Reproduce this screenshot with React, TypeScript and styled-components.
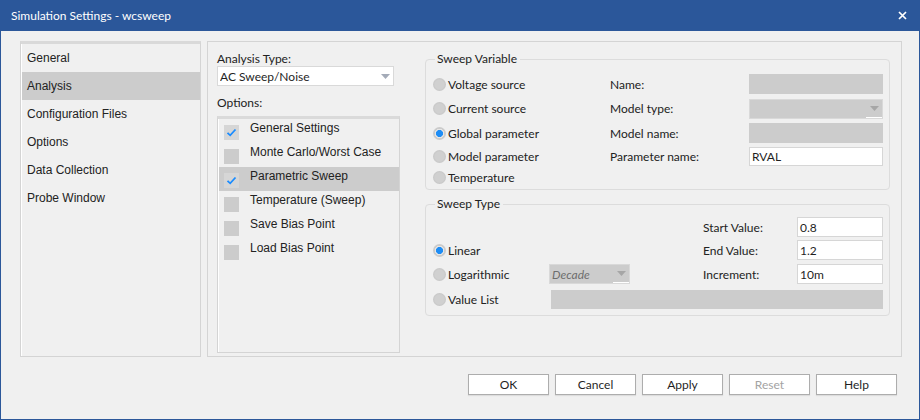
import styled, { createGlobalStyle } from 'styled-components';

const GlobalStyle = createGlobalStyle`
  html, body {
    margin: 0;
    padding: 0;
    background: #f0f0f0;
  }
  * {
    box-sizing: border-box;
  }
`;

const ui = `Lato, "Noto Sans", sans-serif`;
const classic = `"Liberation Sans", Arial, sans-serif`;

const Window = styled.div`
  width: 920px;
  height: 420px;
  background: #f0f0f0;
  border: 1px solid #2b579a;
  border-top: none;
  display: flex;
  flex-direction: column;
  font-family: ${ui};
  font-size: 12px;
  color: #1f1f1f;
`;

const TitleBar = styled.div`
  height: 31px;
  background: #2b579a;
  color: #fff;
  display: flex;
  align-items: center;
  justify-content: space-between;
  padding: 0 13px 0 11px;
  margin: 0 -1px;
  font-size: 12px;
`;

const Body = styled.div`
  padding: 10px 0 0 19px;
  display: flex;
  flex-direction: column;
`;

const MainRow = styled.div`
  display: flex;
  height: 316px;
  gap: 6px;
`;

const Nav = styled.div`
  width: 181px;
  border: 1px solid #d4d4d4;
  border-top: 3px solid #d9d9d9;
  box-shadow: inset 1px 0 #fff;
  padding: 0 0 0 1px;
  font-family: ${classic};
`;

const NavItem = styled.div<{ $active?: boolean }>`
  height: 28px;
  display: flex;
  align-items: center;
  padding-left: 5px;
  background: ${p => (p.$active ? '#cccccc' : 'transparent')};
  color: #222;
`;

const Panel = styled.div`
  width: 695px;
  border: 1px solid #d4d4d4;
  display: flex;
  gap: 25px;
  padding: 9px 0 0 9px;
`;

const LeftCol = styled.div`
  width: 183px;
  display: flex;
  flex-direction: column;
`;

const FieldLabel = styled.div<{ $top: number }>`
  line-height: 14px;
  margin-top: ${p => p.$top}px;
  color: #222;
`;

const Select = styled.div<{ $disabled?: boolean; $width?: number; $italic?: boolean }>`
  height: 20px;
  width: ${p => (p.$width ? `${p.$width}px` : '100%')};
  display: flex;
  align-items: center;
  background: ${p => (p.$disabled ? '#cccccc' : '#fff')};
  border: 1px solid #d9d9d9;
  padding-left: 2px;
  font-style: ${p => (p.$italic ? 'italic' : 'normal')};
  color: ${p => (p.$italic ? '#6d6d6d' : '#1f1f1f')};
`;

const SelectValue = styled.div`
  flex: 1;
  white-space: nowrap;
  overflow: hidden;
`;

const Arrow = styled.div<{ $disabled?: boolean }>`
  width: 16px;
  height: 100%;
  display: flex;
  align-items: center;
  justify-content: center;
  border-bottom: ${p => (p.$disabled ? '1px solid #fff' : 'none')};
  svg {
    display: block;
  }
`;

const OptionList = styled.div`
  margin-top: 6px;
  height: 237px;
  border: 1px solid #d4d4d4;
  border-top: 3px solid #dadada;
  box-shadow: inset 1px 0 #fff;
  padding-left: 1px;
  font-family: ${classic};
`;

const OptionRow = styled.div<{ $active?: boolean }>`
  height: 24px;
  display: flex;
  align-items: center;
  padding-left: 5px;
  gap: 11px;
  background: ${p => (p.$active ? '#cccccc' : 'transparent')};
`;

const CheckBox = styled.div<{ $checked?: boolean }>`
  width: 15px;
  height: 15px;
  background: ${p => (p.$checked ? '#d6d6d6' : '#cccccc')};
  display: flex;
  align-items: center;
  justify-content: center;
  margin-top: 2px;
`;

const OptionText = styled.span`
  padding-bottom: 7px;
  color: #222;
`;

const RightCol = styled.div`
  width: 465px;
  display: flex;
  flex-direction: column;
  gap: 6px;
`;

const Group = styled.fieldset<{ $pt: number; $pb: number }>`
  margin: 0;
  border: 1px solid #dcdcdc;
  border-radius: 4px;
  padding: ${p => p.$pt}px 0 ${p => p.$pb}px 7px;
  min-width: 0;
`;

const Legend = styled.legend`
  line-height: 16px;
  padding: 0 3px 0 2px;
  margin-left: 2px;
  color: #222;
`;

const Grid = styled.div<{ $cols: string; $rows: string }>`
  display: grid;
  grid-template-columns: ${p => p.$cols};
  grid-template-rows: ${p => p.$rows};
  align-items: center;
`;

const RadioWrap = styled.div<{ $col?: number; $row?: number }>`
  display: flex;
  align-items: center;
  gap: 2px;
  grid-column: ${p => p.$col ?? 1};
  grid-row: ${p => p.$row ?? 'auto'};
  color: #222;
  white-space: nowrap;
`;

const RadioDot = styled.div<{ $on?: boolean }>`
  width: 13px;
  height: 13px;
  border-radius: 50%;
  background: ${p =>
    p.$on
      ? 'radial-gradient(circle, #1e8df5 0 3.3px, #e6e6e6 3.8px 4.6px, #cbcbcb 5px)'
      : 'radial-gradient(circle, #d0d0d0 0 4.5px, #c6c6c6 6.5px)'};
`;

const Label = styled.div<{ $col: number; $row?: number }>`
  grid-column: ${p => p.$col};
  grid-row: ${p => p.$row ?? 'auto'};
  color: #222;
  white-space: nowrap;
`;

const Input = styled.div<{ $disabled?: boolean; $col: number; $row?: number; $span?: number; $h?: number; $ml?: number }>`
  grid-column: ${p => p.$col} / span ${p => p.$span ?? 1};
  grid-row: ${p => p.$row ?? 'auto'};
  height: ${p => p.$h ?? 20}px;
  margin-left: ${p => p.$ml ?? 0}px;
  background: ${p => (p.$disabled ? '#cccccc' : '#fff')};
  border: 1px solid ${p => (p.$disabled ? '#cccccc' : '#d6d6d6')};
  display: flex;
  align-items: center;
  padding-left: 2px;
  color: #1f1f1f;
`;

const Cell = styled.div<{ $col: number; $row: number }>`
  grid-column: ${p => p.$col};
  grid-row: ${p => p.$row};
`;

const ButtonRow = styled.div`
  margin-top: 17px;
  display: flex;
  justify-content: flex-end;
  gap: 6px;
  padding-right: 22px;
`;

const Button = styled.button<{ $disabled?: boolean }>`
  width: 81px;
  height: 21px;
  background: #fff;
  border: 1px solid #adadad;
  box-shadow: 0 1px 1px rgba(0, 0, 0, 0.08);
  font-family: ${ui};
  font-size: 12px;
  color: ${p => (p.$disabled ? '#a3a3a3' : '#1f1f1f')};
  padding: 0;
`;

const Check = () => (
  <svg width="11" height="9" viewBox="0 0 11 9">
    <path d="M1.5 4.8 L4.2 7.3 L9.5 1.5" fill="none" stroke="#1a8cff" strokeWidth="1.8" />
  </svg>
);

const Tri = ({ color }: { color: string }) => (
  <svg width="9" height="5" viewBox="0 0 9 5">
    <path d="M0 0 H9 L4.5 5 Z" fill={color} />
  </svg>
);

const Radio = ({ label, on, col, row }: { label: string; on?: boolean; col?: number; row?: number }) => (
  <RadioWrap $col={col} $row={row}>
    <RadioDot $on={on} />
    <span>{label}</span>
  </RadioWrap>
);

const navItems = ['General', 'Analysis', 'Configuration Files', 'Options', 'Data Collection', 'Probe Window'];

const options = [
  { label: 'General Settings', checked: true },
  { label: 'Monte Carlo/Worst Case' },
  { label: 'Parametric Sweep', checked: true, active: true },
  { label: 'Temperature (Sweep)' },
  { label: 'Save Bias Point' },
  { label: 'Load Bias Point' },
];

export default function App() {
  return (
    <>
      <GlobalStyle />
      <Window>
        <TitleBar>
          <span>Simulation Settings - wcsweep</span>
          <svg width="9" height="9" viewBox="0 0 9 9">
            <path d="M1 1 L8 8 M8 1 L1 8" stroke="#fff" strokeWidth="1.7" />
          </svg>
        </TitleBar>
        <Body>
          <MainRow>
            <Nav>
              {navItems.map(n => (
                <NavItem key={n} $active={n === 'Analysis'}>
                  {n}
                </NavItem>
              ))}
            </Nav>
            <Panel>
              <LeftCol>
                <FieldLabel $top={1}>Analysis Type:</FieldLabel>
                <Select $width={177}>
                  <SelectValue>AC Sweep/Noise</SelectValue>
                  <Arrow>
                    <Tri color="#a4abb8" />
                  </Arrow>
                </Select>
                <FieldLabel $top={10}>Options:</FieldLabel>
                <OptionList>
                  {options.map(o => (
                    <OptionRow key={o.label} $active={o.active}>
                      <CheckBox $checked={o.checked}>{o.checked && <Check />}</CheckBox>
                      <OptionText>{o.label}</OptionText>
                    </OptionRow>
                  ))}
                </OptionList>
              </LeftCol>
              <RightCol>
                <Group $pt={5} $pb={2}>
                  <Legend>Sweep Variable</Legend>
                  <Grid $cols="177px 139px 134px" $rows="24px 25px 24px 22px 20px">
                    <Radio label="Voltage source" row={1} />
                    <Label $col={2} $row={1}>Name:</Label>
                    <Input $col={3} $row={1} $disabled />
                    <Radio label="Current source" row={2} />
                    <Label $col={2} $row={2}>Model type:</Label>
                    <Cell $col={3} $row={2}>
                      <Select $disabled>
                        <SelectValue />
                        <Arrow $disabled>
                          <Tri color="#a6a6a6" />
                        </Arrow>
                      </Select>
                    </Cell>
                    <Radio label="Global parameter" on row={3} />
                    <Label $col={2} $row={3}>Model name:</Label>
                    <Input $col={3} $row={3} $disabled />
                    <Radio label="Model parameter" row={4} />
                    <Label $col={2} $row={4}>Parameter name:</Label>
                    <Input $col={3} $row={4} $h={19}>RVAL</Input>
                    <Radio label="Temperature" row={5} />
                  </Grid>
                </Group>
                <Group $pt={3} $pb={4}>
                  <Legend>Sweep Type</Legend>
                  <Grid $cols="116px 154px 94px 86px" $rows="24px 22px 26px 24px">
                    <Label $col={3} $row={1}>Start Value:</Label>
                    <Input $col={4} $row={1}>0.8</Input>
                    <Radio label="Linear" on row={2} />
                    <Label $col={3} $row={2}>End Value:</Label>
                    <Input $col={4} $row={2}>1.2</Input>
                    <Radio label="Logarithmic" row={3} />
                    <Cell $col={2} $row={3}>
                      <Select $disabled $width={81} $italic>
                        <SelectValue>Decade</SelectValue>
                        <Arrow $disabled>
                          <Tri color="#a6a6a6" />
                        </Arrow>
                      </Select>
                    </Cell>
                    <Label $col={3} $row={3}>Increment:</Label>
                    <Input $col={4} $row={3}>10m</Input>
                    <Radio label="Value List" row={4} />
                    <Input $col={2} $row={4} $span={3} $disabled $h={19} $ml={2} />
                  </Grid>
                </Group>
              </RightCol>
            </Panel>
          </MainRow>
          <ButtonRow>
            <Button>OK</Button>
            <Button>Cancel</Button>
            <Button>Apply</Button>
            <Button $disabled>Reset</Button>
            <Button>Help</Button>
          </ButtonRow>
        </Body>
      </Window>
    </>
  );
}
